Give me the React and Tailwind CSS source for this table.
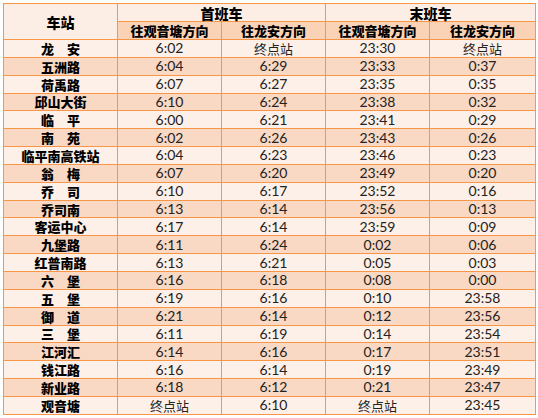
import React from "react";

const rows = [
  ["龙　安", "6:02", "终点站", "23:30", "终点站"],
  ["五洲路", "6:04", "6:29", "23:33", "0:37"],
  ["荷禹路", "6:07", "6:27", "23:35", "0:35"],
  ["邱山大街", "6:10", "6:24", "23:38", "0:32"],
  ["临　平", "6:00", "6:21", "23:41", "0:29"],
  ["南　苑", "6:02", "6:26", "23:43", "0:26"],
  ["临平南高铁站", "6:04", "6:23", "23:46", "0:23"],
  ["翁　梅", "6:07", "6:20", "23:49", "0:20"],
  ["乔　司", "6:10", "6:17", "23:52", "0:16"],
  ["乔司南", "6:13", "6:14", "23:56", "0:13"],
  ["客运中心", "6:17", "6:14", "23:59", "0:09"],
  ["九堡路", "6:11", "6:24", "0:02", "0:06"],
  ["红普南路", "6:13", "6:21", "0:05", "0:03"],
  ["六　堡", "6:16", "6:18", "0:08", "0:00"],
  ["五　堡", "6:19", "6:16", "0:10", "23:58"],
  ["御　道", "6:21", "6:14", "0:12", "23:56"],
  ["三　堡", "6:11", "6:19", "0:14", "23:54"],
  ["江河汇", "6:14", "6:16", "0:17", "23:51"],
  ["钱江路", "6:16", "6:14", "0:19", "23:49"],
  ["新业路", "6:18", "6:12", "0:21", "23:47"],
  ["观音塘", "终点站", "6:10", "终点站", "23:45"],
];

const cjk = "font-['Noto_Sans_CJK_SC',sans-serif]";
const cell = "border border-[#f79646] p-0 text-center leading-none";

export default function App() {
  return (
    <div className="bg-white w-[538px] h-[418px] pt-[3px] pl-[3px]">
      <table className="border-collapse table-fixed w-[532px] text-black">
        <colgroup>
          <col className="w-[114px]" />
          <col className="w-[104px]" />
          <col className="w-[104px]" />
          <col className="w-[104px]" />
          <col className="w-[106px]" />
        </colgroup>
        <thead>
          <tr className="h-[18px] bg-[#fdeee5]">
            <th rowSpan={2} className={`${cell} ${cjk} font-black text-[14px] bg-[#fdeee5]`}>车站</th>
            <th colSpan={2} className={`${cell} ${cjk} font-black text-[14px]`}>首班车</th>
            <th colSpan={2} className={`${cell} ${cjk} font-black text-[14px]`}>末班车</th>
          </tr>
          <tr className="h-[18px] bg-[#fad3b7]">
            <th className={`${cell} ${cjk} font-black text-[13px]`}>往观音塘方向</th>
            <th className={`${cell} ${cjk} font-black text-[13px]`}>往龙安方向</th>
            <th className={`${cell} ${cjk} font-black text-[13px]`}>往观音塘方向</th>
            <th className={`${cell} ${cjk} font-black text-[13px]`}>往龙安方向</th>
          </tr>
        </thead>
        <tbody>
          {rows.map((r, i) => (
            <tr key={i} className={`h-[17.85px] ${i % 2 === 0 ? "bg-[#fdf0e8]" : "bg-[#f9d8c4]"}`}>
              <td className={`${cell} ${cjk} font-black text-[13px]`}>{r[0]}</td>
              {r.slice(1).map((v, j) => (
                <td
                  key={j}
                  className={`${cell} ${v.includes(":") ? "font-['Lato',sans-serif] text-[14px] text-[#222]" : `${cjk} text-[13px] text-[#222]`}`}
                >
                  {v}
                </td>
              ))}
            </tr>
          ))}
        </tbody>
      </table>
    </div>
  );
}
